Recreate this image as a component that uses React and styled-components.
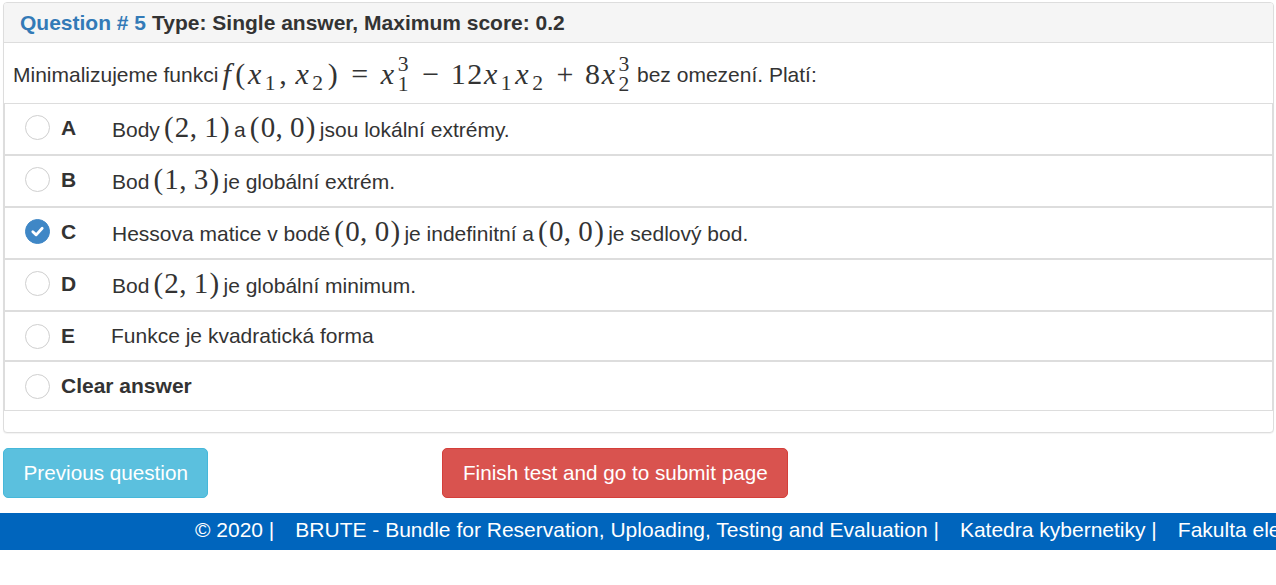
import React from "react";
import styled, { createGlobalStyle } from "styled-components";

const Global = createGlobalStyle`
  html, body { margin: 0; padding: 0; background: #fff; }
  body {
    font-family: "Liberation Sans", Arial, Helvetica, sans-serif;
    font-size: 21px;
    color: #333;
  }
  * { box-sizing: border-box; }
`;

const Page = styled.div`
  padding-top: 2px;
`;

const Panel = styled.section`
  margin: 0 2px 0 3px;
  border: 1px solid #ddd;
  border-radius: 4px;
  background: #fff;
  box-shadow: 0 1px 1px rgba(0, 0, 0, 0.05);
  padding-bottom: 21px;
`;

const Heading = styled.header`
  height: 40px;
  display: flex;
  align-items: center;
  padding: 0 16px;
  background: #f5f5f5;
  border-bottom: 1px solid #ddd;
  border-radius: 3px 3px 0 0;
  font-weight: bold;
  font-size: 21px;
  color: #333;
`;

const QNum = styled.span`
  color: #337ab7;
  margin-right: 6px;
`;

const QuestionText = styled.div`
  height: 60px;
  display: flex;
  align-items: center;
  padding: 3px 9px 0;
  white-space: nowrap;
`;

const Math = styled.span`
  font-family: "Liberation Serif", "Times New Roman", serif;
  font-size: ${(p) => p.$size || 29}px;
  letter-spacing: ${(p) => p.$ls || 0}px;
  line-height: 1;
  margin: 0 ${(p) => (p.$gap ? p.$gap : 3)}px;
  white-space: nowrap;
`;

const MI = styled.i`
  font-style: italic;
  margin-right: 2px;
`;

const Op = styled.span`
  margin: 0 ${(p) => p.$m || 7}px;
`;

const Paren = styled.span`
  margin: 0 1px;
`;

const Comma = styled.span`
  margin-right: 7px;
`;

const Scripts = styled.span`
  display: inline-block;
  vertical-align: -7px;
  font-size: 0.72em;
  line-height: 0.92;
  margin-right: 2px;
  & > span {
    display: block;
  }
`;

const Sub = styled.span`
  font-size: 0.72em;
  vertical-align: -6px;
  line-height: 0;
  margin-right: 2px;
`;

const List = styled.ul`
  list-style: none;
  margin: 0;
  padding: 0;
`;

const Item = styled.li`
  display: flex;
  align-items: center;
  border: 1px solid #ddd;
  min-height: ${(p) => (p.$math ? 52 : 50)}px;
  padding: 0 0 ${(p) => (p.$math ? 3 : 0)}px 20px;
`;

const Radio = styled.span`
  flex: none;
  width: 25px;
  height: 25px;
  border-radius: 50%;
  border: 1px solid ${(p) => (p.$checked ? "#3f87c6" : "#cfcfcf")};
  background: ${(p) => (p.$checked ? "#3f87c6" : "#fff")};
  display: flex;
  align-items: center;
  justify-content: center;
  margin-right: 11px;
`;

const Letter = styled.span`
  flex: none;
  width: ${(p) => p.$w || 51}px;
  font-weight: bold;
`;

const OptText = styled.span`
  white-space: nowrap;
`;

const Bold = styled.span`
  font-weight: bold;
`;

const Actions = styled.div`
  display: flex;
  align-items: center;
  padding: 15px 0 15px 3px;
`;

const Button = styled.button`
  font-family: "Liberation Sans", Arial, sans-serif;
  font-size: 20.7px;
  height: 50px;
  padding: 0 19.5px;
  border-radius: 5px;
  color: #fff;
  cursor: pointer;
  background: ${(p) => (p.$variant === "danger" ? "#d9534f" : "#5bc0de")};
  border: 1px solid ${(p) => (p.$variant === "danger" ? "#d43f3a" : "#46b8da")};
  margin-left: ${(p) => p.$ml || 0}px;
`;

const Footer = styled.footer`
  height: 37px;
  background: #0065bd;
  color: #fff;
  display: flex;
  align-items: center;
  padding: 0 0 4px 195px;
  white-space: nowrap;
  overflow: hidden;
  font-size: 21px;
`;

const FootItem = styled.span`
  flex: none;
  margin-right: 21px;
`;

const Check = () => (
  <svg width="15" height="15" viewBox="0 0 16 16">
    <path d="M3 8.3 L6.6 11.6 L13 4.6" fill="none" stroke="#fff" strokeWidth="3" strokeLinecap="round" strokeLinejoin="round" />
  </svg>
);

const Pair = ({ a, b }) => (
  <Math $ls={0.3}>
    <Paren>(</Paren>
    {a}
    <Comma>,</Comma>
    {b}
    <Paren>)</Paren>
  </Math>
);

export default function App() {
  return (
    <Page>
      <Global />
      <Panel>
        <Heading>
          <QNum>Question # 5</QNum>
          <span>Type: Single answer, Maximum score: 0.2</span>
        </Heading>
        <QuestionText>
          <span>Minimalizujeme funkci</span>
          <Math $gap={4} $size={30} $ls={1.6}>
            <MI>f</MI>
            <Paren>(</Paren>
            <MI>x</MI>
            <Sub>1</Sub>
            <Comma>,</Comma>
            <MI>x</MI>
            <Sub>2</Sub>
            <Paren>)</Paren>
            <Op $m={11}>=</Op>
            <MI>x</MI>
            <Scripts>
              <span>3</span>
              <span>1</span>
            </Scripts>
            <Op $m={10}>−</Op>
            12
            <MI>x</MI>
            <Sub>1</Sub>
            <MI>x</MI>
            <Sub>2</Sub>
            <Op $m={10}>+</Op>
            8<MI>x</MI>
            <Scripts>
              <span>3</span>
              <span>2</span>
            </Scripts>
          </Math>
          <span>bez omezení. Platí:</span>
        </QuestionText>
        <List>
          <Item $math>
            <Radio />
            <Letter>A</Letter>
            <OptText>
              Body<Pair a="2" b="1" />a<Pair a="0" b="0" />jsou lokální extrémy.
            </OptText>
          </Item>
          <Item $math>
            <Radio />
            <Letter>B</Letter>
            <OptText>
              Bod<Pair a="1" b="3" />je globální extrém.
            </OptText>
          </Item>
          <Item $math>
            <Radio $checked>
              <Check />
            </Radio>
            <Letter>C</Letter>
            <OptText>
              Hessova matice v bodě<Pair a="0" b="0" />je indefinitní a<Pair a="0" b="0" />je sedlový bod.
            </OptText>
          </Item>
          <Item $math>
            <Radio />
            <Letter>D</Letter>
            <OptText>
              Bod<Pair a="2" b="1" />je globální minimum.
            </OptText>
          </Item>
          <Item>
            <Radio />
            <Letter $w={50}>E</Letter>
            <OptText>Funkce je kvadratická forma</OptText>
          </Item>
          <Item>
            <Radio />
            <Bold>Clear answer</Bold>
          </Item>
        </List>
      </Panel>
      <Actions>
        <Button>Previous question</Button>
        <Button $variant="danger" $ml={234}>
          Finish test and go to submit page
        </Button>
      </Actions>
      <Footer>
        <FootItem>© 2020 |</FootItem>
        <FootItem>BRUTE - Bundle for Reservation, Uploading, Testing and Evaluation |</FootItem>
        <FootItem>Katedra kybernetiky |</FootItem>
        <FootItem>Fakulta elektrotechnická |</FootItem>
        <FootItem>České vysoké učení technické v Praze</FootItem>
      </Footer>
    </Page>
  );
}
